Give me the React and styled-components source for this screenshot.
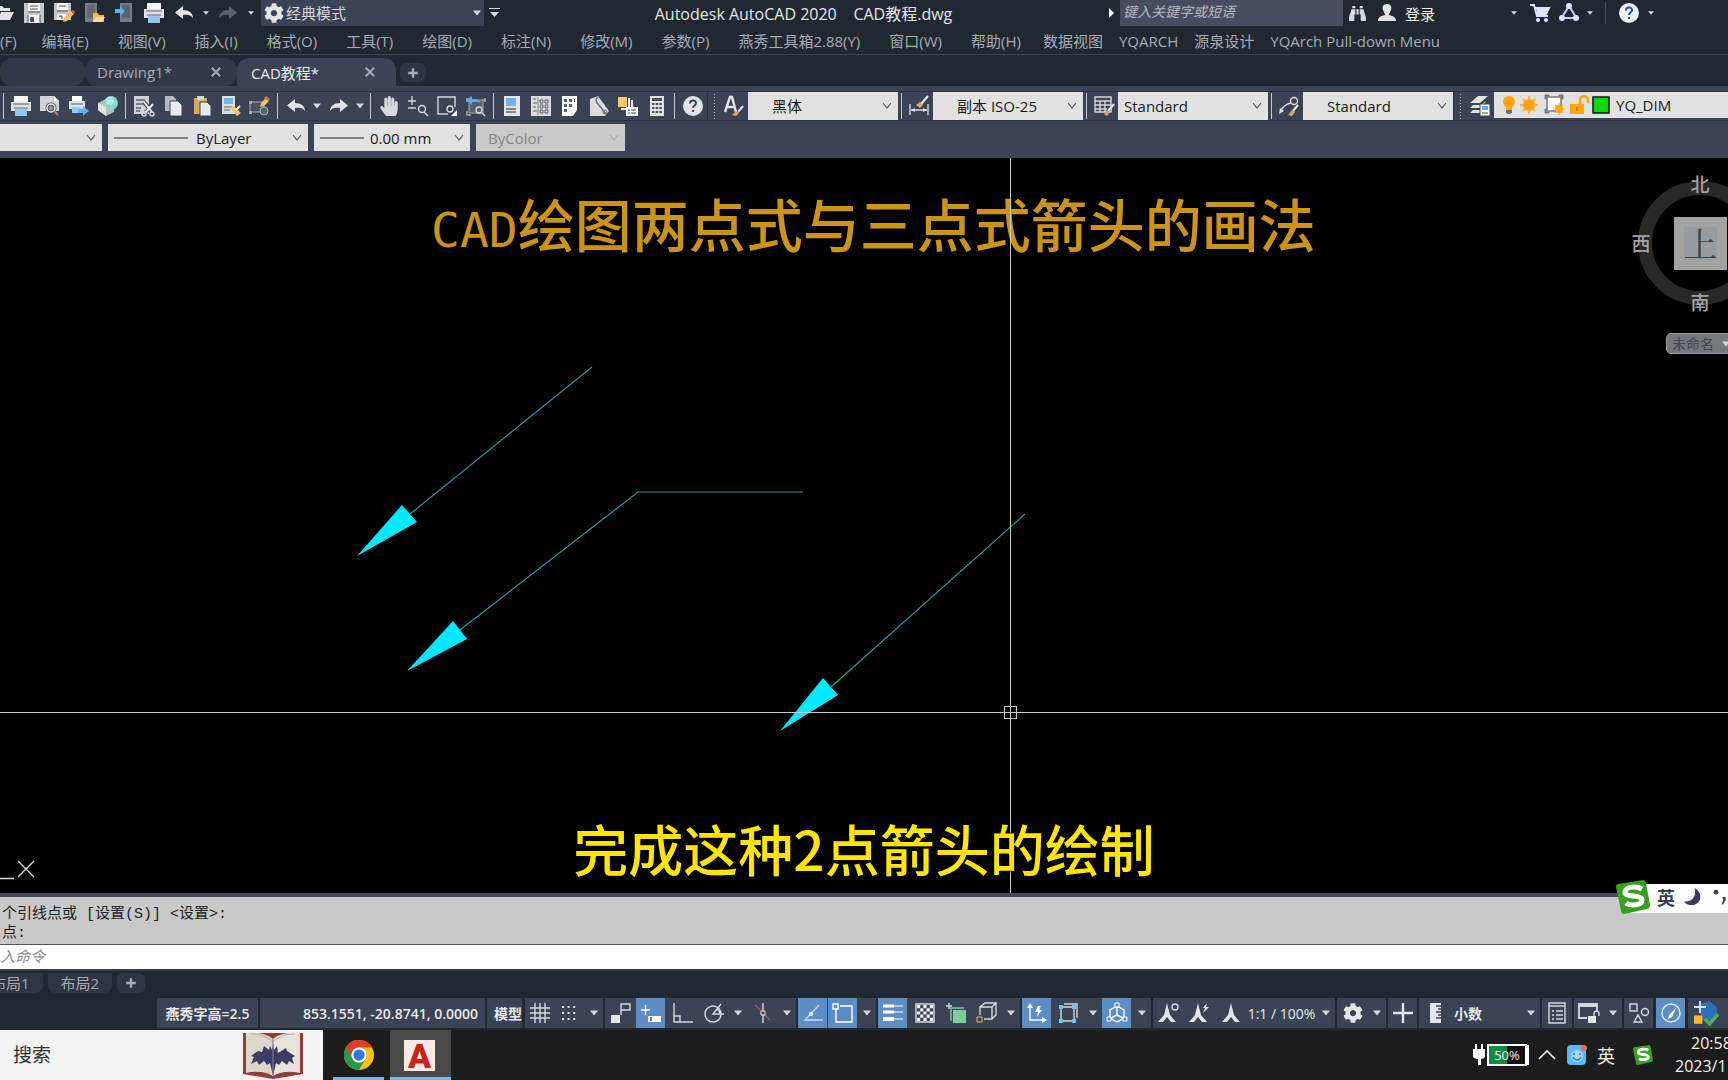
import React from "react";
import styled, { createGlobalStyle, css } from "styled-components";
import { FaBinoculars, FaCog, FaHandPaper } from "react-icons/fa";

const theme = {
  oscuro: "#202932",
  panel: "#3b4454",
  borde: "#2a3240",
  azul: "#5c8dc4",
  caja: "#e1e1e1",
  claro: "#d5d8dc",
  gris: "#a7abb2",
  cian: "#00e9ff",
};

const GlobalStyle = createGlobalStyle`
  *, *::before {
    box-sizing: border-box;
  }
  body {
    margin: 0;
    overflow: hidden;
    background: #000;
    font-family: "Open Sans", "Noto Sans CJK SC", sans-serif;
    font-size: 15px;
    color: ${theme.claro};
  }
  button, input, select {
    font: inherit;
    color: inherit;
    margin: 0;
    padding: 0;
    border: 0;
    background: none;
  }
  svg {
    display: block;
    flex: none;
  }
`;

const Ventana = styled.div`
  display: flex;
  flex-direction: column;
  width: 100%;
  height: 100vh;
  overflow: hidden;
  white-space: nowrap;
`;

/* ---------- barra de titulo ---------- */

const BarraTitulo = styled.header`
  display: flex;
  align-items: center;
  height: 26px;
  background: ${theme.oscuro};
  overflow: hidden;
`;

const AccesoRapido = styled.div`
  display: flex;
  align-items: center;
  margin-left: -11px;
`;

const Boton = styled.button`
  display: flex;
  flex: none;
  align-items: center;
  justify-content: center;
  width: ${(props) => props.$w || 29}px;
  height: 100%;
  color: ${(props) => props.$color || theme.claro};
`;

const Espacio = styled.div`
  display: flex;
  align-items: center;
  width: 223px;
  height: 26px;
  margin-left: 2px;
  padding: 0 3px;
  background: ${theme.panel};

  select {
    flex: 1;
    appearance: none;
    padding-left: 2px;
    line-height: 24px;
  }
`;

const Titulo = styled.h1`
  flex: 1;
  margin: 0;
  text-align: center;
  font-size: 16px;
  font-weight: 400;
  line-height: 26px;
  padding-top: 2px;
  color: #e4e6e8;
  white-space: pre;
`;

const Buscador = styled.input`
  width: 223px;
  height: 26px;
  padding: 0 3px 4px;
  font-size: 14px;
  font-style: italic;
  background: #454d5e;

  &::placeholder {
    color: #b4b8c0;
    opacity: 1;
  }
`;

const Ayudas = styled.div`
  display: flex;
  align-items: center;
  width: 625px;
  height: 26px;
`;

const Ingresar = styled.button`
  display: flex;
  align-items: center;
  justify-content: space-between;
  width: 118px;
  padding: 0 3px;
  margin-right: 5px;
  color: #f2f2f2;
`;

const Raya = styled.span`
  flex: none;
  width: 1px;
  height: 22px;
  margin: 0 8px;
  background: #4a525f;
`;

/* ---------- menu y pestañas ---------- */

const Menu = styled.nav`
  display: flex;
  align-items: center;
  gap: 29px;
  height: 29px;
  padding-top: 2px;
  border-bottom: 1px solid #3a434e;
  background: ${theme.oscuro};
  color: ${theme.gris};
  overflow: hidden;

  button {
    flex: none;
    line-height: 24px;
  }
  button:first-child {
    margin-right: -4px;
  }
  button:nth-child(14) {
    margin-left: -7px;
  }
  button:nth-child(n + 15) {
    margin-left: -13px;
  }
`;

const Pestanas = styled.div`
  display: flex;
  align-items: flex-end;
  height: 31px;
  background: ${theme.oscuro};
`;

const Pestana = styled.div`
  display: flex;
  align-items: center;
  justify-content: space-between;
  width: ${(props) => props.$w}px;
  height: 28px;
  padding: ${(props) => (props.$activa ? "0 20px 0 14px" : "0 15px 0 12px")};
  border-radius: 12px 12px ${(props) => (props.$activa ? "0 0" : "12px 12px")};
  background: ${(props) => (props.$activa ? theme.panel : "#303947")};
  color: ${(props) => (props.$activa ? "#e8eaec" : theme.gris)};
`;

const NuevaPestana = styled.button`
  display: flex;
  align-items: center;
  justify-content: center;
  width: ${(props) => props.$w || 26}px;
  height: 19px;
  margin: 0 4px 4px;
  border-radius: 6px;
  background: #2e3643;
  color: ${theme.gris};
`;

/* ---------- barras de herramientas ---------- */

const Herramientas = styled.section`
  padding: 5px 0 7px;
  background: ${theme.panel};
`;

const Fila = styled.div`
  display: flex;
  align-items: center;
  height: 30px;
  border-top: 1px solid ${theme.borde};
  border-bottom: 1px solid ${theme.borde};
  overflow: hidden;
`;

const FilaPropiedades = styled.div`
  display: flex;
  gap: 6px;
  height: 27px;
  margin-top: 3px;
  overflow: hidden;
`;

const Separador = styled.span`
  flex: none;
  width: 1px;
  height: 26px;
  margin: 0 3px;
  background: #c4c8ce;

  &:first-child {
    margin-right: 2px;
  }
`;

const Agarre = styled.span`
  flex: none;
  width: 13px;
  height: 28px;
  border-left: 1px solid ${theme.borde};
  background: radial-gradient(circle, #a9aeb6 0 1px, transparent 1px) 5px 4px / 3px 3px
    repeat-y;
`;

const Caja = styled.label`
  display: flex;
  flex: none;
  align-items: center;
  width: ${(props) => props.$w || 150}px;
  height: ${(props) => props.$h || 28}px;
  padding: 0 5px 0 ${(props) => props.$pad || 6}px;
  background: ${(props) => (props.$apagada ? "#cacaca" : theme.caja)};
  color: ${(props) => (props.$apagada ? "#858585" : "#1b1b1b")};

  select {
    flex: 1;
    min-width: 0;
    appearance: none;
    opacity: 1;
  }
  svg + select {
    padding-left: ${(props) => props.$sangria || 0}px;
  }
`;

const Capa = styled.label`
  display: flex;
  flex: 1;
  align-items: center;
  height: 26px;
  padding-left: 5px;
  margin-bottom: 2px;
  background: ${theme.caja};
  color: #1b1b1b;

  select {
    flex: 1;
    appearance: none;
    padding-left: 6px;
  }
`;

/* ---------- area de dibujo ---------- */

const Lienzo = styled.main`
  position: relative;
  flex: 1;
  min-height: 0;
  background: #000;
  overflow: hidden;
`;

const Dibujo = styled.svg`
  position: absolute;
  top: 0;
  left: 0;
  width: 100%;
  height: 100%;
`;

const Rotulo = styled.div`
  position: absolute;
  top: 24px;
  left: 431px;
  font-family: "Noto Sans CJK SC", sans-serif;
  font-size: 57px;
  font-weight: 500;
  line-height: 80px;
  color: #cc9416;

  span {
    font-family: "DejaVu Sans Mono", monospace;
    font-size: 48px;
  }
`;

const Subtitulo = styled.p`
  position: absolute;
  left: 0;
  right: 0;
  bottom: 6px;
  margin: 0;
  text-align: center;
  font-family: "Noto Sans CJK SC", sans-serif;
  font-size: 55px;
  font-weight: 500;
  line-height: 80px;
  color: #ffe500;
  text-shadow: 0 0 3px #000, 0 0 3px #000;
`;

const Brujula = styled.div`
  position: absolute;
  top: 12px;
  right: -45px;
  display: grid;
  grid-template: 28px 90px 28px / 28px 90px 28px;
  place-items: center;
  font-family: "Noto Sans CJK SC", sans-serif;
  font-size: 19px;
  font-weight: 500;
  color: #a3a3a3;

  &::before {
    content: "";
    grid-area: 1 / 1 / 4 / 4;
    width: 124px;
    height: 124px;
    border: 14px solid #292929;
    border-radius: 50%;
  }
`;

const Punto = styled.span`
  grid-area: ${(props) => props.$area};
  line-height: 28px;
  z-index: 1;
`;

const Cubo = styled.button`
  grid-area: 2 / 2;
  z-index: 1;
  width: 53px;
  height: 53px;
  border: 10px solid #a3a3a2;
  background: #969ba2;
  font-family: "Noto Serif CJK SC", "Noto Sans CJK SC", serif;
  font-size: 34px;
  font-weight: 400;
  line-height: 32px;
  color: #3f4247;
`;

const Ucs = styled.button`
  position: absolute;
  top: 175px;
  left: calc(100% - 62px);
  display: flex;
  align-items: center;
  gap: 8px;
  width: 90px;
  height: 21px;
  padding: 0 5px;
  border: 1px solid #9a9aa2;
  border-radius: 5px;
  background: #77777f;
  font-size: 14px;
  line-height: 18px;
  color: #44444c;
`;

/* ---------- linea de comandos ---------- */

const Comandos = styled.section`
  position: relative;
  border-top: 4px solid #424a58;
  background: #c8c8c8;
  color: #222;
`;

const Historial = styled.div`
  height: 48px;
  padding: 8px 2px 0;
  font-family: "Liberation Mono", "Noto Sans CJK SC", monospace;
  font-size: 15px;
  line-height: 19px;
  border-bottom: 1px solid #555;
  white-space: pre;
`;

const Entrada = styled.input`
  display: block;
  width: 100%;
  height: 24px;
  padding: 0 0 3px;
  background: #fff;
  font-size: 15px;
  font-style: italic;

  &::placeholder {
    color: #8a8a8a;
    opacity: 1;
  }
`;

const BarraIme = styled.div`
  position: absolute;
  top: -17px;
  right: 0;
  display: flex;
  align-items: center;
  width: 112px;
  height: 34px;

  &::before {
    content: "";
    position: absolute;
    inset: 4px 0 1px 14px;
    background: #fcfcfd;
  }
  > * {
    position: relative;
  }
  span {
    width: 30px;
    padding-left: 7px;
    font-size: 18px;
    font-weight: 600;
    color: #3b3f55;
  }
`;

/* ---------- presentaciones y estado ---------- */

const Presentaciones = styled.div`
  display: flex;
  align-items: center;
  height: 29px;
  padding-bottom: 4px;
  border-top: 2px solid #343d49;
  background: ${theme.oscuro};
  color: ${theme.gris};

  button {
    height: 20px;
    line-height: 20px;
  }
  ${NuevaPestana} {
    margin: 0;
  }
`;

const Presentacion = styled.button`
  margin-right: 5px;
  padding: 0 13px;
  border-radius: 0 0 8px 8px;
  background: #2e3643;

  &:first-child {
    margin-left: -22px;
  }
`;

const BarraEstado = styled.footer`
  display: flex;
  align-items: stretch;
  gap: 2px;
  height: 32px;
  padding: 0 0 2px 157px;
  background: ${theme.oscuro};
  font-size: 14px;
  color: #e6e8ea;
  overflow: hidden;
`;

const Grupo = styled.div`
  display: flex;
  flex: none;
  align-items: center;
  justify-content: ${(props) => props.$just || "flex-start"};
  width: ${(props) => (props.$w ? props.$w + "px" : "auto")};
  padding: 0 ${(props) => props.$pad || 0}px;
  margin-right: ${(props) => (props.$margen ? 1 : 0)}px;
  background: ${theme.panel};
  font-weight: ${(props) => (props.$fuerte ? 600 : 400)};
`;

const Celda = styled.button`
  display: flex;
  flex: none;
  align-items: center;
  justify-content: center;
  width: ${(props) => props.$w || 31}px;
  height: 30px;
  ${(props) =>
    props.$activo &&
    css`
      width: 29px;
      margin-right: ${props.$w - 29}px;
      background: ${theme.azul};
    `}
`;

const Escala = styled.span`
  width: 71px;
  text-align: center;
`;

/* ---------- barra de tareas ---------- */

const BarraTareas = styled.div`
  display: flex;
  align-items: stretch;
  height: 50px;
  background: #1d1d1d;
`;

const Busqueda = styled.div`
  display: flex;
  align-items: center;
  width: 323px;
  margin-right: 10px;
  padding: 0 20px 0 13px;
  background: #f2f2f2;
  color: #333;

  input {
    flex: 1;
    min-width: 0;
    font-size: 19px;
  }
  input::placeholder {
    color: #333;
    opacity: 1;
  }
`;

const Aplicacion = styled.button`
  display: flex;
  align-items: center;
  justify-content: center;
  width: ${(props) => (props.$activa ? 61 : 51)}px;
  margin-right: 6px;
  padding-right: ${(props) => (props.$activa ? 2 : 0)}px;
  border-top: 3px solid transparent;
  border-bottom: 3px solid #76b9ed;
  background: ${(props) => (props.$activa ? "#4a4a4a" : "transparent")};
`;

const LogoA = styled.span`
  width: 31px;
  height: 31px;
  background: #fbe9e4;
  color: #c4261d;
  font-family: Roboto, sans-serif;
  font-size: 34px;
  font-weight: 900;
  line-height: 32px;
`;

const Bandeja = styled.div`
  display: flex;
  align-items: center;
  width: 256px;
  margin-left: auto;
  color: #f0f0f0;
  overflow: hidden;

  > * {
    flex: none;
  }
`;

const Bateria = styled.span`
  width: 40px;
  height: 22px;
  border: 2px solid #fff;
  background: linear-gradient(90deg, #138a43 50%, #111 50%);
  box-shadow: 3px 0 0 -1px #fff;
  font-size: 13px;
  line-height: 18px;
  text-align: center;
`;

const Idioma = styled.button`
  width: 38px;
  font-size: 18px;
`;

const Reloj = styled.div`
  width: 66px;
  margin-left: 10px;
  padding-left: 5px;
  font-size: 16px;
  line-height: 23px;

  span {
    display: block;
  }
  span:first-child {
    padding-left: 16px;
  }
`;

/* ---------- iconos, todos en una rejilla de 20 x 20 ---------- */

const trazo = { fill: "none", stroke: "#d5d8dc", strokeWidth: 1.4 };
const blanco = "#e2e4e7";

const flecha = "M9 3 1 9.500 9 16V12c5-1 8 0 10 3-0-5-4-8-10-8z";
const compas = "M10 0 13 12 19 19H14L10 14 6 19H1L7 12z";

const iconos = {
  abrir: <path d="M2 3h6l2 2h6v3H6L3 17H2zM7 9h13l-4 8H4z" fill={blanco} />,
  guardar: (
    <>
      <path d="M0 0h20v20H0z" fill="#c3c6ca" />
      <path d="M4 0h12v8H4zM4 12h12v8H4z" fill="#f5f5f5" />
      <path d="M4 9h12M6 3h8M6 6h8M4 12v8M16 12v8" stroke="#4b515b" />
      <path d="M6 14h4v5H6z" fill="#4b515b" />
    </>
  ),
  guardarComo: (
    <>
      <path d="M0 0h17v17H0z" fill="#c3c6ca" />
      <path d="M3 0h11v7H3zM3 11h9v6H3z" fill="#f5f5f5" />
      <path d="M3 8h11M5 3h7M5 13h3v3" stroke="#4b515b" fill="none" />
      <path d="M9 19l1-4 7-7 3 3-7 7z" fill="#f2bd54" />
      <path d="M17 8l3 3 1-2-2-2z" fill="#dd5544" />
    </>
  ),
  telefono: (
    <>
      <path d="M1 0h12v19H1z" fill="#777d85" />
      <path d="M3 2h8v13H3z" fill="#646a73" />
      <path d="M9 10h5l1 2h5v7H9z" fill="#e9b968" />
      <path d="M9 19l3-5h9l-3 5z" fill="#ffdc9b" />
    </>
  ),
  telefonoEntrada: (
    <>
      <path d="M6 0h12v19H6z" fill="#777d85" />
      <path d="M8 2h8v13H8z" fill="#59616c" />
      <path d="M1 6h5V3l5 5-5 5v-3H1z" fill="#5eb0ec" />
    </>
  ),
  imprimir: (
    <>
      <path d="M3 0h14v6H3z" fill="#f5f5f5" />
      <path d="M0 6h20v9H0z" fill="#dfe1e3" />
      <path d="M2 8h16M3 12h14" stroke="#59616c" />
      <path d="M4 13h12v7H4z" fill="#90c8ef" />
    </>
  ),
  deshacer: <path d={flecha} fill={blanco} />,
  rehacer: <path d={flecha} fill={blanco} transform="matrix(-1 0 0 1 20 0)" />,
  rehacerApagado: (
    <path d={flecha} fill="#5b636e" transform="matrix(-1 0 0 1 20 0)" />
  ),
  persona: (
    <path
      d="M10 1c4 0 5 3 4 6-.5 2-2 3-2 5 4 1 7 2 7 6H1c0-4 3-5 7-6 0-2-1.500-3-2-5-1-3 0-6 4-6z"
      fill={blanco}
    />
  ),
  carrito: (
    <>
      <path d="M0 2h4l3 11h11M5 5h14l-3 6H7" fill="none" stroke="#dfe3ff" strokeWidth="2" />
      <path d="M6 5h13l-3 6H7z" fill="#dfe3ff" />
      <circle cx="8" cy="17" r="2" fill="#dfe3ff" />
      <circle cx="16" cy="17" r="2" fill="#dfe3ff" />
    </>
  ),
  a360: (
    <>
      <path d="M10 3 2.500 15h15z" fill="none" stroke="#c8d0f5" strokeWidth="2" />
      <circle cx="10" cy="3" r="3" fill="#dfe3ff" />
      <circle cx="3" cy="15" r="3" fill="#dfe3ff" />
      <circle cx="17" cy="15" r="3" fill="#dfe3ff" />
    </>
  ),
  vistaPrevia: (
    <>
      <path d="M0 0h14l5 5v10H0z" fill="#d0d2d5" />
      <path d="M14 0v5h5z" fill="#fff" />
      <circle cx="11" cy="12" r="4" fill="#8a9099" stroke="#3b4454" strokeWidth="3" />
      <circle cx="11" cy="12" r="4" fill="none" stroke="#eee" strokeWidth="1.500" />
      <path d="M14 15l4 4" stroke="#b98a5a" strokeWidth="2" />
    </>
  ),
  publicar: (
    <>
      <path d="M3 0h10v5H3z" fill="#fff" />
      <path d="M0 5h16v8H0z" fill="#dfe1e3" />
      <path d="M2 8h12" stroke="#59616c" />
      <path d="M3 11h9v6H3z" fill="#90c8ef" />
      <path d="M9 13h5v-3l6 5-6 5v-3H9z" fill="#5eb0ec" />
    </>
  ),
  esfera: (
    <>
      <path d="M0 7l8-4 8 5v8l-8 4-8-6z" fill="#b9bcbf" />
      <path d="M0 7l8 4v9l-8-6z" fill="#e4e4e4" />
      <circle cx="13" cy="7" r="7" fill="#8fd3cf" />
      <circle cx="12" cy="5" r="4" fill="#b7e6e2" />
    </>
  ),
  cortar: (
    <>
      <path d="M0 0h15v18H0z" fill="#cfd1d4" />
      <path d="M2 4h9M2 8h8M2 12h5M2 15h4" stroke="#59616c" strokeWidth="1.500" />
      <path d="M10 6l8 10M19 8l-8 9" stroke="#3b4454" strokeWidth="4" />
      <path d="M10 6l8 10M19 8l-8 9" stroke="#eee" strokeWidth="2" />
      <circle cx="10" cy="18" r="2" {...trazo} />
      <circle cx="18" cy="18" r="2" {...trazo} />
    </>
  ),
  copiar: (
    <>
      <path d="M2 0h8l3 3v12H2z" fill="#b5b8bd" />
      <path d="M7 5h8l4 4v11H7z" fill="#e8e9ea" stroke="#3b4454" />
    </>
  ),
  pegar: (
    <>
      <path d="M2 2h13v16H2z" fill="#dca765" />
      <path d="M5 0h7v4H5z" fill="#d5d5d5" />
      <path d="M8 6h7l4 4v10H8z" fill="#e8e9ea" stroke="#3b4454" />
    </>
  ),
  igualar: (
    <>
      <path d="M1 0h13v18H1z" fill="#dcdee0" />
      <path d="M3 2h9v6H3z" fill="#6fb5ea" />
      <path d="M3 11h8M3 14h6" stroke="#59616c" />
      <path d="M9 12l4-2 7 7-4 3z" fill="#f0c467" />
      <path d="M15 14l4-4" stroke="#eee" strokeWidth="2" />
    </>
  ),
  editarBloque: (
    <>
      <path d="M0 6h14v10H0z" fill="#4b5360" stroke="#a7abb2" />
      <path d="M-1 5h3v3h-3zM-1 15h3v3h-3z" fill="#a7abb2" />
      <circle cx="14" cy="15" r="4" fill="#59616c" stroke="#b5b8bd" />
      <path d="M10 11l1-4 5-5 3 3-5 5z" fill="#f0c467" />
      <path d="M16 0l4 3-2 2-4-3z" fill="#e06a5a" />
    </>
  ),
  zoom: (
    <>
      <path d="M0 5h8M4 0v9M0 12h8" {...trazo} />
      <circle cx="14" cy="13" r="3.500" {...trazo} />
      <path d="M16 16l4 4" {...trazo} />
    </>
  ),
  zoomVentana: (
    <>
      <path d="M11 18H1V1h17v10" {...trazo} />
      <circle cx="13" cy="13" r="3" {...trazo} />
      <path d="M20 14v6h-6z" fill="#fff" />
    </>
  ),
  zoomPrevio: (
    <>
      <path d="M3 4h14v13H3z" fill="#59616c" stroke="#a7abb2" />
      <path d="M1 2v4M19 2v4M1 15v4h4M17 4h3" fill="none" stroke="#a7abb2" strokeWidth="1.500" />
      <path d="M6 0v3c4 0 7 0 9 4-3-2-6-1-9-1v3L0 4z" fill="#5eb0ec" />
      <circle cx="13" cy="14" r="3" {...trazo} />
      <path d="M15 16l4 4" {...trazo} />
    </>
  ),
  propiedades: (
    <>
      <path d="M2 0h16v20H2z" fill="#e3e4e6" />
      <path d="M4 2h10v8H4z" fill="#6fb5ea" />
      <path d="M4 13h10M4 16h10" stroke="#59616c" strokeWidth="1.500" />
    </>
  ),
  centro: (
    <>
      <path d="M0 0h20v20H0z" fill="#d9dbdd" />
      <path d="M7 1v18" stroke="#8b9099" />
      <path
        d="M2 3h3M2 7h4M2 11h3M2 15h4M9 4h3v3H9zM14 4h3v3h-3zM9 9h3v3H9zM14 9h3v3h-3zM9 14h3v3H9zM14 14h3v3h-3z"
        fill="none"
        stroke="#59616c"
      />
    </>
  ),
  paletas: (
    <>
      <path d="M2 0h15v14l-4 6H2z" fill="#fff" />
      <path
        d="M4 3h3v3H4zM9 3h3v3H9zM4 8h3v3H4zM9 8h3v3H9zM4 13h3v3H4zM14 3h1v3h-1z"
        fill="#59616c"
      />
    </>
  ),
  planos: (
    <>
      <path d="M1 3l8-3 11 15-4 5H1z" fill="#dadcde" />
      <path d="M9 1c-3 2-2 5 0 7l8 10" fill="none" stroke="#6b727d" strokeWidth="1.500" />
      <circle cx="16" cy="16" r="2" fill="none" stroke="#6b727d" />
    </>
  ),
  marcas: (
    <>
      <path d="M0 1h9v10H0z" fill="#f5c96c" />
      <path d="M11 2v10M14 4v8M3 13h8" stroke="#eee" strokeWidth="2" />
      <path d="M8 11h12v9H8z" fill="#fff" />
      <path d="M10 14h2M13 14h5M10 17h2M13 17h5" stroke="#444" />
    </>
  ),
  calculadora: (
    <>
      <path d="M3 0h14v20H3z" fill="#dfe1e3" />
      <path d="M5 2h10v3H5z" fill="#4b515b" />
      <path d="M5 8h10M5 12h10M5 16h10" stroke="#4b515b" strokeWidth="2" strokeDasharray="2.500 1.200" />
    </>
  ),
  estiloTexto: (
    <>
      <path d="M1 16 6 1h2l4 15M3 11h8" fill="none" stroke={blanco} strokeWidth="2.400" />
      <path d="M14 16l5-6" stroke="#ddd" strokeWidth="2" />
      <path d="M8 19l4-4 3 2-3 3z" fill="#dca765" />
    </>
  ),
  cota: (
    <>
      <path d="M1 8v11M19 8v11M2 14h16" {...trazo} />
      <path d="M2 14l4-2v4zM18 14l-4-2v4z" fill={blanco} />
      <path d="M12 8l7-8" stroke="#eee" strokeWidth="2" />
      <path d="M7 9l4-3 3 3-3 3z" fill="#dca765" />
    </>
  ),
  tabla: (
    <>
      <path d="M1 1h16v15H1zM1 5h16M1 9h16M1 13h12M6 5v11M11 5v11" {...trazo} />
      <path d="M14 15l6-7" stroke="#eee" strokeWidth="2" />
      <path d="M10 18l3-4 3 2-3 4z" fill="#dca765" />
    </>
  ),
  directriz: (
    <>
      <path d="M2 15c2-5 5-7 10-8" {...trazo} />
      <circle cx="15" cy="5" r="3.500" {...trazo} />
      <path d="M0 18l1-6 4 3z" fill={blanco} />
      <path d="M14 15l5-6" stroke="#eee" strokeWidth="2" />
      <path d="M9 19l4-5 3 2-3 4z" fill="#dca765" />
    </>
  ),
  capas: (
    <>
      <path d="M0 7l8-7h10l-8 7zM0 12l3-3h8l5-4-4 7zM0 17l3-3h8v3z" fill={blanco} />
      <path d="M10 8h10v12H10z" fill="#fff" stroke="#3b4454" />
      <path d="M12 10h6v4h-6z" fill="#5eb0ec" />
      <path d="M12 17h6" stroke="#444" />
    </>
  ),
  bombilla: (
    <>
      <circle cx="10" cy="7" r="6" fill="#ffa60a" />
      <path d="M7 12h6v3H7z" fill="#ffa60a" />
      <path d="M7 15h6v3l-2 1H9l-2-1z" fill="#6d6d6d" />
    </>
  ),
  sol: (
    <>
      <circle cx="10" cy="10" r="6" fill="#ffa60a" />
      <path
        d="M10 1v18M1 10h18M4 4l12 12M16 4 4 16"
        stroke="#ffa60a"
        strokeWidth="1.500"
      />
    </>
  ),
  ventanaSol: (
    <>
      <path d="M2 2h14v14H2z" fill="#fff" stroke="#777" strokeWidth="1.500" />
      <path d="M0 0h4v1H1v3H0zM14 0h4v4h-1V1h-3zM0 14h1v3h3v1H0z" fill="#777" stroke="#777" />
      <circle cx="14" cy="14" r="4" fill="#ffa60a" />
      <path d="M14 8v12M8 14h12M10 10l8 8M18 10l-8 8" stroke="#ffa60a" />
    </>
  ),
  candado: (
    <>
      <path d="M0 9h14v10H0z" fill="#ffa60a" />
      <path d="M10 9V5c0-5 8-5 8 0v3" fill="none" stroke="#ffa60a" strokeWidth="2.500" />
      <path d="M7 12v4" stroke="#c07000" strokeWidth="1.500" />
    </>
  ),
  verde: <path d="M3 2h16v16H3z" fill="#00dc00" stroke="#111" strokeWidth="1.500" />,
  cuadricula: (
    <path d="M5 0v20M10 0v20M15 0v20M0 5h20M0 10h20M0 15h20" {...trazo} />
  ),
  puntos: (
    <path
      d="M2 4h15M2 10h15M2 16h15"
      stroke={blanco}
      strokeWidth="2"
      strokeDasharray="2 3.600"
    />
  ),
  inferir: (
    <>
      <path d="M0 12h9v8H0z" fill={blanco} />
      <path d="M10 12V1h9v6h-9" {...trazo} />
    </>
  ),
  dinamica: (
    <>
      <path d="M0 7h9M4.500 2v10" {...trazo} stroke="#fff" />
      <path d="M7 13h13v6H7z" fill="#fff" />
      <path d="M9 14h2v4H9z" fill="#5c8dc4" />
    </>
  ),
  orto: <path d="M1 0v19h19M1 13h6v6" {...trazo} />,
  polar: (
    <>
      <circle cx="9" cy="11" r="8" {...trazo} />
      <path d="M20 11H9l8-10M13 6c2 1 3 3 3 5" {...trazo} />
    </>
  ),
  iso: (
    <>
      <path d="M10 0v20" {...trazo} />
      <path d="M2 2l15 15" stroke="#a55b63" strokeWidth="1.500" />
      <path d="M8 8h4v4H8z" fill="#3b4454" stroke={blanco} />
    </>
  ),
  rastreo: (
    <>
      <path d="M16 2 2 17h18" {...trazo} stroke="#c4dbf3" />
      <circle cx="8" cy="11" r="2" fill="#fff" />
    </>
  ),
  referencia: (
    <path d="M3 6v13h16V3H7M0 1h5v5H0z" {...trazo} stroke="#fff" />
  ),
  grosor: (
    <>
      <path d="M9 3h11M9 9h11M9 16h11" stroke="#fff" />
      <path d="M0 3h11M0 9h11" stroke="#fff" strokeWidth="3" />
      <path d="M0 16h11" stroke="#fff" strokeWidth="4" />
    </>
  ),
  transparencia: (
    <>
      <path d="M1 1h18v18H1z" {...trazo} />
      <path
        d="M2 3.600h16M2 10h16M2 16.400h16"
        stroke="#eee"
        strokeWidth="3.200"
        strokeDasharray="3.200 3.200"
      />
      <path
        d="M5.200 6.800h13M5.200 13.200h13"
        stroke="#eee"
        strokeWidth="3.200"
        strokeDasharray="3.200 3.200"
      />
    </>
  ),
  ciclo: (
    <>
      <path d="M3 0v6M0 3h6" {...trazo} />
      <path d="M5 18V5h13" {...trazo} stroke="#7ccf9d" />
      <path d="M7 7h13v13H7z" fill="#7ccf9d" />
    </>
  ),
  refer3d: (
    <>
      <path d="M3 12V4h12v12H7M3 4l5-4h11v12l-4 4M15 4l4-4" {...trazo} />
      <path d="M0 14h5v5H0z" fill="#3b4454" stroke="#e9b07a" />
    </>
  ),
  scp: (
    <>
      <path d="M3 4v13h13" {...trazo} stroke="#fff" />
      <path d="M0 5l3-5 3 5zM15 14l5 3-5 3z" fill="#fff" />
      <path d="M11 3l-3 6h3l-1 5 5-7h-3l2-4z" fill="#fff" />
    </>
  ),
  filtro: (
    <>
      <path d="M2 4h13v14H2zM5 1h13v14" {...trazo} />
      <path d="M0 2h4v4H0zM13 2h4v4h-4zM0 16h4v4H0zM13 16h4v4h-4z" fill="#7dbdf0" />
    </>
  ),
  gizmo: (
    <>
      <path d="M10 3 3 7v8l7 4 7-4V7zM10 2v10l-8 4M10 12l8 4" {...trazo} stroke="#fff" />
      <path d="M8 0h4v4H8zM0 14h4v4H0zM16 14h4v4h-4z" fill="#5c8dc4" stroke="#fff" />
    </>
  ),
  anotacion: (
    <>
      <path d={compas} fill={blanco} transform="translate(-2 0)" />
      <circle cx="16" cy="4" r="3" {...trazo} />
    </>
  ),
  anotacionRayo: (
    <>
      <path d={compas} fill={blanco} transform="translate(-2 0)" />
      <path d="M17 0l-4 5h2l-2 5 6-6h-3z" fill={blanco} />
    </>
  ),
  anotacionSola: <path d={compas} fill={blanco} />,
  mas: <path d="M10 0v20M0 10h20" stroke={blanco} strokeWidth="2.400" />,
  regla: (
    <>
      <path d="M5 0h11v20H5z" fill={blanco} />
      <path d="M11 3h5M13 6h3M11 9h5M13 12h3M11 15h5" stroke="#3b4454" strokeWidth="1.500" />
    </>
  ),
  lista: (
    <>
      <path d="M2 0h16v20H2zM2 3h16" {...trazo} />
      <path d="M5 8h2M9 8h7M5 12h2M9 12h7M5 16h2M9 16h7" {...trazo} />
    </>
  ),
  bloqueo: (
    <>
      <path d="M8 15H0V1h18v7M0 3h18" {...trazo} strokeWidth="1.800" />
      <path d="M9 13h8v7H9z" fill={blanco} />
      <path d="M15 13v-2c0-4 5-4 5 0v2" {...trazo} />
    </>
  ),
  aislar: (
    <>
      <path d="M1 1h7v7H1zM9 12l4 7H5z" {...trazo} />
      <circle cx="16" cy="9" r="3.500" {...trazo} />
    </>
  ),
  rendimiento: (
    <>
      <circle cx="10" cy="10" r="9" {...trazo} stroke="#e4eefb" />
      <path d="M15 5l-7 7-1 4 4-2z" fill="#fff" />
    </>
  ),
  limpiar: (
    <>
      <path d="M4 3l8-3 7 5v9l-7 5-6-4z" fill="#2f6fc0" />
      <path d="M5 0v10M0 5h10" stroke="#dbe7f2" strokeWidth="1.500" />
      <path d="M0 12h7v7H0z" fill="#f3b83a" />
      <path d="M9 15l4 4 7-8" fill="none" stroke="#4fae57" strokeWidth="3" />
    </>
  ),
  cerrar: <path d="M3 3l14 14M17 3 3 17" stroke={theme.gris} strokeWidth="3.400" />,
  cruz: <path d="M10 2v16M2 10h16" stroke={theme.gris} strokeWidth="4" />,
  luna: <path d="M12 0c11 7 6 19-3 19-4 0-7-1-9-4 9 1 14-6 12-15z" fill="#3b3f55" />,
  coma: (
    <>
      <circle cx="5" cy="4" r="3" fill="#3b3f55" />
      <path d="M13 10h4v4l-3 5h-2l2-5z" fill="#3b3f55" />
    </>
  ),
  subir: <path d="M2 14l8-8 8 8" fill="none" stroke="#eee" strokeWidth="1.600" />,
  sonrisa: (
    <>
      <rect x="0" y="0" width="19" height="20" rx="4" fill="#58b9f4" />
      <circle cx="10" cy="11" r="6" fill="#a5dbfa" />
      <path d="M7 8v2M13 8v2M6 12c2 4 6 4 8 0" fill="none" stroke="#1978d0" strokeWidth="1.600" />
      <circle cx="17" cy="3" r="3" fill="#f4694f" />
    </>
  ),
};

const Icono = ({ nombre, tam = 20 }) => (
  <svg width={tam} height={tam} viewBox="0 0 20 20" overflow="visible" aria-hidden="true">
    {iconos[nombre]}
  </svg>
);

const Triangulo = ({ tam = 8 }) => (
  <svg width={tam} height={tam} viewBox="0 0 10 10" aria-hidden="true">
    <path d="M0 2h10L5 8z" fill={theme.claro} />
  </svg>
);

const Chevron = ({ color = "#555" }) => (
  <svg width="12" height="12" viewBox="0 0 12 12" aria-hidden="true">
    <path d="M2 3l4 5 4-5" fill="none" stroke={color} strokeWidth="1.200" />
  </svg>
);

const Ayuda = ({ fondo = "#e2e4e7", letra = "#3b4454" }) => (
  <svg width="20" height="20" viewBox="0 0 20 20" aria-hidden="true">
    <circle cx="10" cy="10" r="10" fill={fondo} />
    <path
      d="M7 7.500c0-4 6-4 6-.5 0 2.500-3 2.500-3 5M10 14v2"
      fill="none"
      stroke={letra}
      strokeWidth="2"
    />
  </svg>
);

const Enchufe = () => (
  <svg width="15" height="22" viewBox="0 0 15 22" aria-hidden="true">
    <path
      d="M3 0h2v5h4V0h2v5h2v7c0 2-2 3-4 3v6H6v-6c-3 0-5-1-5-3V5h2z"
      fill="#fff"
    />
  </svg>
);

const Sogou = ({ tam }) => (
  <svg width={tam} height={tam} viewBox="0 0 34 34" aria-hidden="true">
    <path d="M0 7c0-2 0-2 2-3L27 0c2 0 2 1 3 3l4 22c0 2-1 3-3 4L8 34c-2 0-3-1-3-3z" fill="#36a01f" />
    <path
      d="M26 9c-5-3-16-3-17 3s17 2 17 8-12 6-16 3"
      fill="none"
      stroke="#fff"
      strokeWidth="5"
    />
  </svg>
);

const Chrome = () => (
  <svg width="30" height="30" viewBox="0 0 32 32" aria-hidden="true">
    <circle cx="16" cy="16" r="16" fill="#fbc116" />
    <path d="M2 8A16 16 0 0 1 30 8H16a8 8 0 0 0-7 12z" fill="#e33b2e" />
    <path d="M2.100 8A16 16 0 0 0 16 32l7-12A8 8 0 0 1 9 20z" fill="#229a4b" />
    <circle cx="16" cy="16" r="8" fill="#fff" />
    <circle cx="16" cy="16" r="6" fill="#2c7be5" />
  </svg>
);

const Libro = () => (
  <svg width="60" height="48" viewBox="0 0 60 48" aria-hidden="true">
    <path d="M0 2h60v41l-30 5L0 43z" fill="#8d3f38" />
    <path d="M3 2c10-1 20 0 27 6v37c-8-5-18-5-27-3z" fill="#dcd6cb" />
    <path d="M57 2c-10-1-20 0-27 6v37c8-5 18-5 27-3z" fill="#e9e4db" />
    <path d="M8 3c8 0 15 2 22 8 6-6 14-8 22-8" fill="none" stroke="#b9ad9b" />
    <path
      d="M30 11l1 8 3-4 1 7 8-5 1 3 8 5-3 2 2 6-5-3-2 4-5-4-3 4-3-2-3 13-3-13-3 2-3-4-5 4-2-4-6 3 3-7-3-1 7-5 4 1 2-6 5 4 1-4 2 4z"
      fill="#3d3b68"
    />
    <path d="M30 8v37" stroke="#8c8496" />
  </svg>
);

/* ---------- datos ---------- */

const menus = [
  "(F)",
  "编辑(E)",
  "视图(V)",
  "插入(I)",
  "格式(O)",
  "工具(T)",
  "绘图(D)",
  "标注(N)",
  "修改(M)",
  "参数(P)",
  "燕秀工具箱2.88(Y)",
  "窗口(W)",
  "帮助(H)",
  "数据视图",
  "YQARCH",
  "源泉设计",
  "YQArch Pull-down Menu",
];

const estandar = [
  ["imprimir", "vistaPrevia", "publicar", "esfera"],
  ["cortar", "copiar", "pegar", "igualar", "editarBloque"],
];

const paneles = ["propiedades", "centro", "paletas", "planos", "marcas", "calculadora"];

// ancho de celda y contenido de cada grupo; "v" es una flecha desplegable
const estado = [
  { w: 30, celdas: ["cuadricula", "puntos", "v"] },
  { w: 31, celdas: ["inferir", "*dinamica", "orto", "polar", "v", "iso", "v"] },
  { w: 30, celdas: ["*rastreo", "*referencia", "v"] },
  { w: 31, celdas: ["*grosor", "transparencia", "ciclo", "refer3d", "v"] },
  { w: 31, celdas: ["*scp", "filtro", "v", "*gizmo", "v"] },
];

const Celdas = ({ w, celdas }) =>
  celdas.map((celda, i) => {
    if (celda === "v") {
      return (
        <Celda key={i} $w={18} aria-label="更多">
          <Triangulo />
        </Celda>
      );
    }
    const activo = celda[0] === "*";
    const nombre = celda.replace("*", "");
    return (
      <Celda key={i} $w={w} $activo={activo} aria-label={nombre}>
        <Icono nombre={nombre} />
      </Celda>
    );
  });

const Lista = ({ valor, etiqueta, linea, apagada, ...resto }) => (
  <Caja $apagada={apagada} {...resto}>
    {linea && (
      <svg width={linea} height="2" aria-hidden="true">
        <path d={`M0 1h${linea}`} stroke="#222" strokeWidth="1" />
      </svg>
    )}
    <select aria-label={etiqueta} disabled={apagada}>
      <option>{valor}</option>
    </select>
    <Chevron color={apagada ? "#aaa" : "#555"} />
  </Caja>
);

const Iconos = ({ lista, w }) =>
  lista.map((nombre) => (
    <Boton key={nombre} $w={w} aria-label={nombre}>
      <Icono nombre={nombre} />
    </Boton>
  ));

const Cabecera = () => (
  <BarraTitulo>
    <AccesoRapido>
      <Iconos
        w={30}
        lista={[
          "abrir",
          "guardar",
          "guardarComo",
          "telefono",
          "telefonoEntrada",
          "imprimir",
          "deshacer",
        ]}
      />
      <Boton $w={14} aria-label="放弃列表">
        <Triangulo tam={6} />
      </Boton>
      <Iconos w={30} lista={["rehacerApagado"]} />
      <Boton $w={16} aria-label="重做列表">
        <Triangulo tam={6} />
      </Boton>
    </AccesoRapido>
    <Espacio>
      <FaCog size={20} color={blanco} />
      <select aria-label="工作空间">
        <option>经典模式</option>
      </select>
      <Triangulo />
    </Espacio>
    <Boton $w={20} aria-label="自定义">
      <svg width="11" height="10" viewBox="0 0 11 10">
        <path d="M0 0h11v1H0zM1 4h9L5.500 9z" fill={theme.claro} />
      </svg>
    </Boton>
    <Titulo>{"Autodesk AutoCAD 2020    CAD教程.dwg"}</Titulo>
    <Ayudas>
      <Boton $w={17} aria-label="收拢">
        <svg width="6" height="10" viewBox="0 0 6 10">
          <path d="M0 0l5 5-5 5z" fill="#fff" />
        </svg>
      </Boton>
      <Buscador aria-label="搜索" placeholder="键入关键字或短语" />
      <Boton aria-label="查找">
        <FaBinoculars size={17} />
      </Boton>
      <Iconos lista={["persona"]} w={30} />
      <Ingresar>
        登录 <Triangulo tam={6} />
      </Ingresar>
      <Iconos lista={["carrito", "a360"]} />
      <Boton $w={14} aria-label="更多">
        <Triangulo tam={6} />
      </Boton>
      <Raya />
      <Boton aria-label="帮助">
        <Ayuda fondo="#eef1f8" letra="#2b50a8" />
      </Boton>
      <Boton $w={16} aria-label="帮助列表">
        <Triangulo tam={6} />
      </Boton>
    </Ayudas>
  </BarraTitulo>
);

const BarraHerramientas = () => (
  <Herramientas>
    <Fila>
      <Separador />
      {estandar.map((lista) => (
        <React.Fragment key={lista[0]}>
          <Iconos lista={lista} />
          <Separador />
        </React.Fragment>
      ))}
      <Iconos lista={["deshacer"]} />
      <Boton $w={14} aria-label="放弃列表">
        <Triangulo />
      </Boton>
      <Iconos lista={["rehacer"]} />
      <Boton $w={14} aria-label="重做列表">
        <Triangulo />
      </Boton>
      <Separador />
      <Boton aria-label="平移">
        <FaHandPaper size={20} />
      </Boton>
      <Iconos lista={["zoom", "zoomVentana", "zoomPrevio"]} />
      <Separador />
      <Iconos lista={paneles} />
      <Separador />
      <Boton aria-label="帮助">
        <Ayuda />
      </Boton>
      <Agarre />
      <Iconos lista={["estiloTexto"]} w={28} />
      <Lista valor="黑体" etiqueta="文字样式" $pad={24} />
      <Separador />
      <Iconos lista={["cota"]} w={28} />
      <Lista valor="副本 ISO-25" etiqueta="标注样式" $pad={24} />
      <Separador />
      <Iconos lista={["tabla"]} w={28} />
      <Lista valor="Standard" etiqueta="表格样式" />
      <Separador />
      <Iconos lista={["directriz"]} w={28} />
      <Lista valor="Standard" etiqueta="多重引线样式" $pad={24} />
      <Agarre />
      <Iconos lista={["capas"]} w={28} />
      <Capa>
        <Icono nombre="bombilla" />
        <Icono nombre="sol" />
        <svg width="6" height="20" />
        <Icono nombre="ventanaSol" />
        <svg width="5" height="20" />
        <Icono nombre="candado" />
        <Icono nombre="verde" />
        <select aria-label="图层">
          <option>YQ_DIM</option>
        </select>
      </Capa>
    </Fila>
    <FilaPropiedades>
      <Lista valor="" etiqueta="颜色" $w={102} $h={27} />
      <Lista valor="ByLayer" etiqueta="线型" linea={74} $w={200} $h={27} $sangria={8} />
      <Lista valor="0.00 mm" etiqueta="线宽" linea={44} $w={156} $h={27} $sangria={6} />
      <Lista valor="ByColor" etiqueta="打印样式" apagada $w={149} $h={27} $pad={12} />
    </FilaPropiedades>
  </Herramientas>
);

const AreaDibujo = () => (
  <Lienzo>
    <Rotulo>
      <span>CAD</span>绘图两点式与三点式箭头的画法
    </Rotulo>
    <Dibujo aria-hidden="true">
      <g fill="none" stroke="#2b99a3" strokeWidth="1.200">
        <path d="M410 356 592 209" />
        <path d="M460 472 638 334H803" />
        <path d="M831 529 1025 356" />
      </g>
      <g fill={theme.cian}>
        <path d="M357 398 402 347 417 364z" />
        <path d="M407 513 453 463 467 481z" />
        <path d="M780 573 823 520 838 537z" />
      </g>
      <g fill="none" stroke="#c9c9c9" shapeRendering="crispEdges">
        <path d="M0 554.500H4000M1010.500 0V2000" />
        <path d="M1004.500 548.500h12v12h-12z" />
      </g>
      <path d="M0 720.500h14M18 703l16 16M34 703l-16 16" stroke="#d8d8d8" strokeWidth="1.300" />
    </Dibujo>
    <Subtitulo>完成这种2点箭头的绘制</Subtitulo>
    <Brujula>
      <Punto $area="1 / 2">北</Punto>
      <Punto $area="2 / 1">西</Punto>
      <Cubo>上</Cubo>
      <Punto $area="3 / 2">南</Punto>
    </Brujula>
    <Ucs>
      未命名 <Triangulo />
    </Ucs>
  </Lienzo>
);

const PieComandos = () => (
  <Comandos>
    <Historial>{"个引线点或 [设置(S)] <设置>:\n点:"}</Historial>
    <Entrada aria-label="命令" placeholder="入命令" />
    <BarraIme>
      <Sogou tam={34} />
      <span>英</span>
      <svg width="6" height="20" />
      <Icono nombre="luna" tam={18} />
      <svg width="10" height="20" />
      <Icono nombre="coma" tam={16} />
    </BarraIme>
  </Comandos>
);

const Estado = () => (
  <BarraEstado>
    <Grupo $w={101} $just="center" $fuerte>
      燕秀字高=2.5
    </Grupo>
    <Grupo $w={225} $pad={7} $just="flex-end" $fuerte>
      853.1551, -20.8741, 0.0000
    </Grupo>
    <Grupo $w={35} $just="flex-end" $fuerte $margen>
      模型
    </Grupo>
    {estado.map((grupo, i) => (
      <Grupo key={i}>
        <Celdas {...grupo} />
      </Grupo>
    ))}
    <Grupo>
      <Celdas w={31} celdas={["anotacion", "anotacionRayo", "anotacionSola"]} />
      <Escala>1:1 / 100%</Escala>
      <Celdas celdas={["v"]} />
    </Grupo>
    <Grupo>
      <Celda aria-label="切换工作空间">
        <FaCog size={20} />
      </Celda>
      <Celdas celdas={["v"]} />
    </Grupo>
    <Grupo>
      <Celdas w={29} celdas={["mas"]} />
    </Grupo>
    <Grupo $w={121} $just="space-between">
      <Celdas w={31} celdas={["regla"]} />
      <Grupo $w={64} $fuerte>
        小数
      </Grupo>
      <Celdas celdas={["v"]} />
    </Grupo>
    <Grupo>
      <Celdas w={30} celdas={["lista"]} />
    </Grupo>
    <Grupo>
      <Celdas w={30} celdas={["bloqueo", "v"]} />
    </Grupo>
    <Grupo $margen>
      <Celdas w={29} celdas={["aislar"]} />
    </Grupo>
    <Grupo $margen>
      <Celdas w={29} celdas={["*rendimiento"]} />
    </Grupo>
    <Grupo $w={60} $pad={2}>
      <Celda aria-label="性能">
        <Icono nombre="limpiar" tam={24} />
      </Celda>
    </Grupo>
  </BarraEstado>
);

const Tareas = () => (
  <BarraTareas>
    <Busqueda>
      <input aria-label="搜索" placeholder="搜索" />
      <Libro />
    </Busqueda>
    <Aplicacion aria-label="Chrome">
      <Chrome />
    </Aplicacion>
    <Aplicacion $activa aria-label="AutoCAD">
      <LogoA>A</LogoA>
    </Aplicacion>
    <Bandeja>
      <Enchufe />
      <Bateria>50%</Bateria>
      <Boton $w={40} aria-label="显示隐藏的图标">
        <Icono nombre="subir" />
      </Boton>
      <Icono nombre="sonrisa" />
      <Idioma>英</Idioma>
      <Boton $w={35} aria-label="搜狗输入法">
        <Sogou tam={20} />
      </Boton>
      <Reloj>
        <span>20:58</span>
        <span>2023/1</span>
      </Reloj>
    </Bandeja>
  </BarraTareas>
);

const App = () => {
  return (
    <>
      <GlobalStyle />
      <Ventana>
        <Cabecera />
        <Menu>
          {menus.map((menu) => (
            <button key={menu}>{menu}</button>
          ))}
        </Menu>
        <Pestanas>
          <Pestana $w={85} />
          <Pestana $w={152}>
            <button>Drawing1*</button>
            <button aria-label="关闭">
              <Icono nombre="cerrar" tam={12} />
            </button>
          </Pestana>
          <Pestana $w={159} $activa>
            <button>CAD教程*</button>
            <button aria-label="关闭">
              <Icono nombre="cerrar" tam={12} />
            </button>
          </Pestana>
          <NuevaPestana aria-label="新图形">
            <Icono nombre="cruz" tam={12} />
          </NuevaPestana>
        </Pestanas>
        <BarraHerramientas />
        <AreaDibujo />
        <PieComandos />
        <Presentaciones>
          <Presentacion>布局1</Presentacion>
          <Presentacion>布局2</Presentacion>
          <NuevaPestana $w={28} aria-label="新布局">
            <Icono nombre="cruz" tam={12} />
          </NuevaPestana>
        </Presentaciones>
        <Estado />
        <Tareas />
      </Ventana>
    </>
  );
};

export default App;
